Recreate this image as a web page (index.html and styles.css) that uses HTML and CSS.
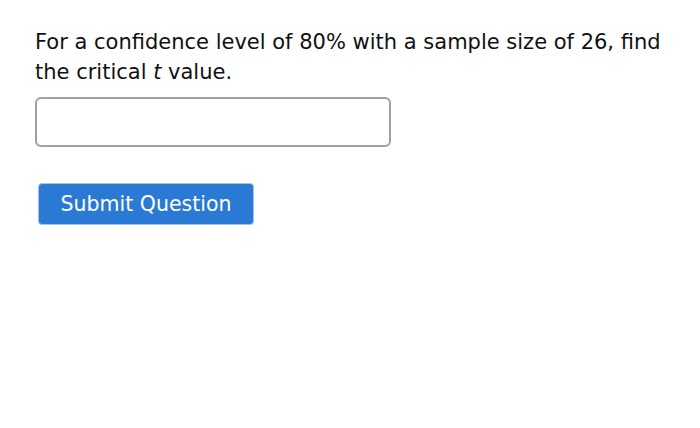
FILE: index.html
```html
<!DOCTYPE html>
<html>
<head>
<meta charset="utf-8">
<link rel="stylesheet" href="styles.css">
</head>
<body>
<div class="page">
  <p class="question">For a confidence level of 80% with a sample size of 26, find the critical <i>t</i> value.</p>
  <input class="answer" type="text">
  <div class="actions">
    <button class="submit" type="button">Submit Question</button>
  </div>
</div>
</body>
</html>
```
FILE: styles.css
```css
html, body {
  margin: 0;
  padding: 0;
  background: #ffffff;
}
.page {
  padding: 27px 20px 0 35px;
  font-family: "DejaVu Sans", sans-serif;
  color: #111;
}
.question {
  margin: 0;
  font-size: 21px;
  line-height: 30px;
  max-width: 640px;
}
.answer {
  display: block;
  box-sizing: border-box;
  margin-top: 10px;
  width: 356px;
  height: 50px;
  border: 2px solid #a0a0a0;
  border-radius: 6px;
  background: #fff;
}
.actions {
  margin-top: 36px;
  padding-left: 3px;
}
.submit {
  box-sizing: border-box;
  width: 216px;
  height: 42px;
  border: 1px solid #9ec3ee;
  border-radius: 4px;
  background: #2a7ad5;
  color: #fff;
  font-family: "DejaVu Sans", sans-serif;
  font-size: 20.5px;
  padding: 0;
}
```
